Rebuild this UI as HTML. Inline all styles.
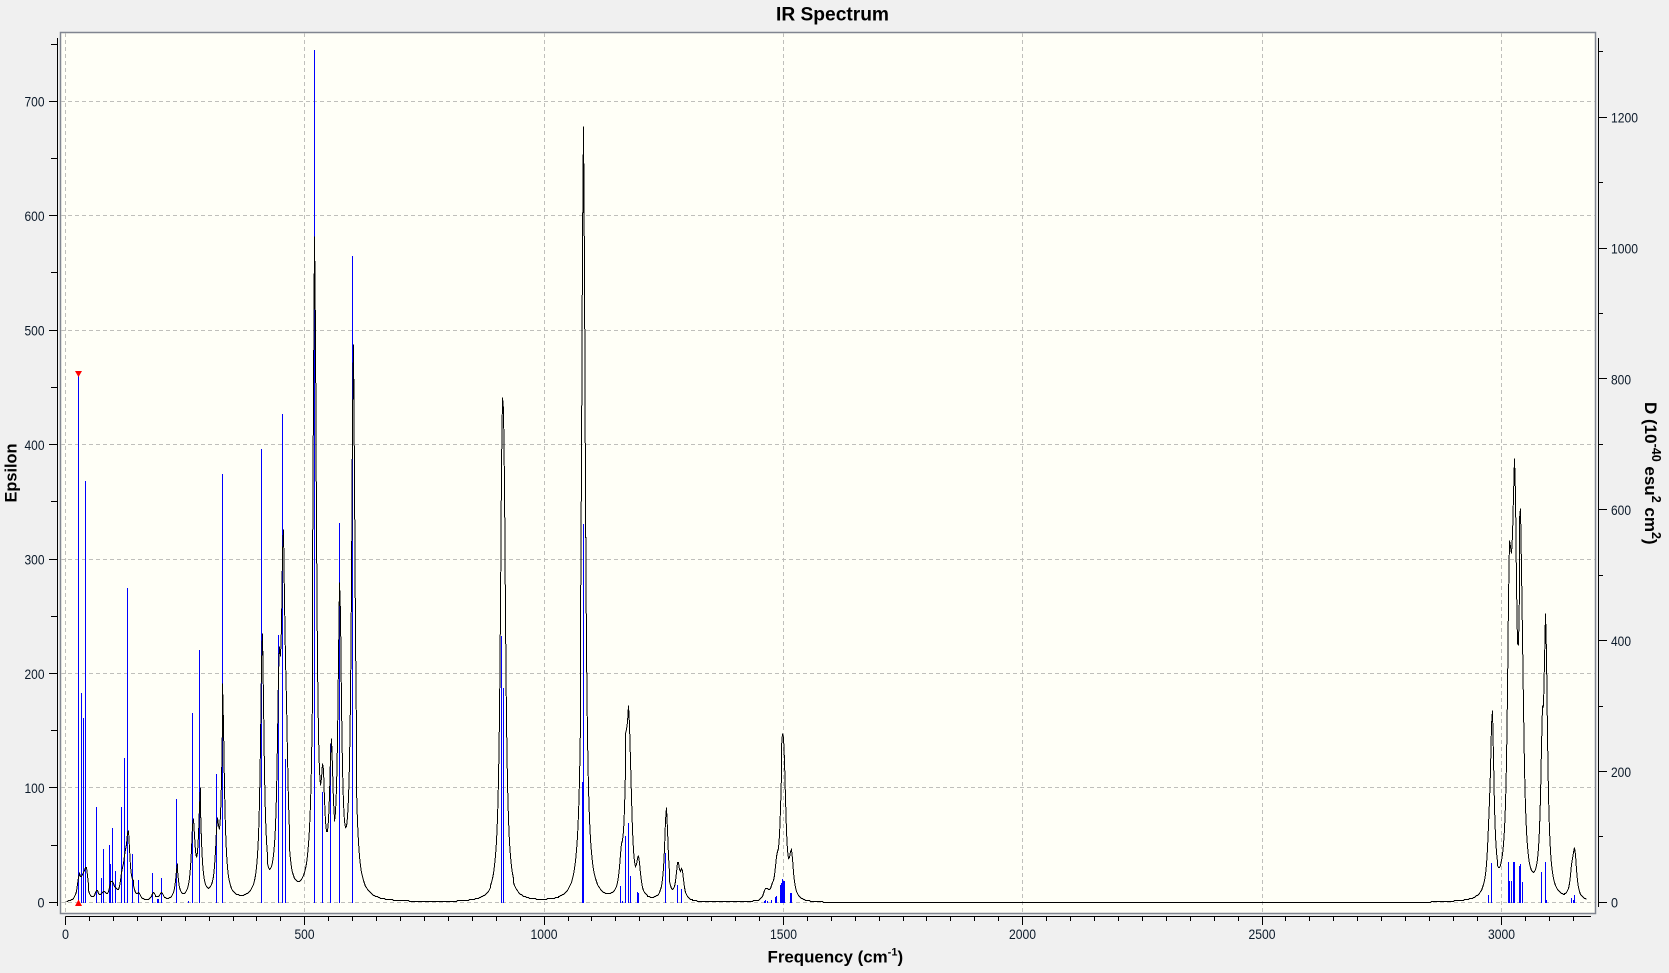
<!DOCTYPE html>
<html><head><meta charset="utf-8"><title>IR Spectrum</title>
<style>
html,body{margin:0;padding:0;background:#f0f0f0;width:1669px;height:973px;overflow:hidden}
svg{display:block}
text{font-family:"Liberation Sans",sans-serif;fill:#000}
.t{font-size:13.5px;fill:#0c1a2a}
.b{font-size:16.9px;font-weight:bold}
</style></head><body>
<svg xmlns="http://www.w3.org/2000/svg" width="1669" height="973" viewBox="0 0 1669 973">
<rect x="0" y="0" width="1669" height="973" fill="#f0f0f0"/>
<rect x="60.5" y="32.5" width="1535" height="881" fill="#fffff7" stroke="#808590" stroke-width="1.5"/>
<path id="grid" fill="none" stroke="#bfbfbb" stroke-width="1" stroke-dasharray="4 3" shape-rendering="crispEdges"/>
<path id="axes" fill="none" stroke="#000" stroke-width="1" shape-rendering="crispEdges"/>
<path id="sticks" fill="none" stroke="#0000ff" stroke-width="1" shape-rendering="crispEdges"/>
<path id="curve" fill="none" stroke="#000" stroke-width="1" shape-rendering="crispEdges"/>
<path d="M75 371H82L78.5 377Z M75 906H82L78.5 899.5Z" fill="#ff0000"/>

<text x="832.5" y="20.5" text-anchor="middle" font-size="19" font-weight="bold" textLength="113" lengthAdjust="spacingAndGlyphs">IR Spectrum</text>

<g class="t" text-anchor="end">
<text class="t" x="44.5" y="106.7" textLength="20" lengthAdjust="spacingAndGlyphs">700</text>
<text class="t" x="44.5" y="221" textLength="20" lengthAdjust="spacingAndGlyphs">600</text>
<text class="t" x="44.5" y="335.5" textLength="20" lengthAdjust="spacingAndGlyphs">500</text>
<text class="t" x="44.5" y="450" textLength="20" lengthAdjust="spacingAndGlyphs">400</text>
<text class="t" x="44.5" y="564.4" textLength="20" lengthAdjust="spacingAndGlyphs">300</text>
<text class="t" x="44.5" y="678.8" textLength="20" lengthAdjust="spacingAndGlyphs">200</text>
<text class="t" x="44.5" y="793.2" textLength="20" lengthAdjust="spacingAndGlyphs">100</text>
<text class="t" x="44.5" y="907.7" textLength="7" lengthAdjust="spacingAndGlyphs">0</text>
</g>

<g>
<text class="t" x="1611" y="122.7" textLength="27" lengthAdjust="spacingAndGlyphs">1200</text>
<text class="t" x="1611" y="253.5" textLength="27" lengthAdjust="spacingAndGlyphs">1000</text>
<text class="t" x="1611" y="384.4" textLength="20" lengthAdjust="spacingAndGlyphs">800</text>
<text class="t" x="1611" y="515.2" textLength="20" lengthAdjust="spacingAndGlyphs">600</text>
<text class="t" x="1611" y="646" textLength="20" lengthAdjust="spacingAndGlyphs">400</text>
<text class="t" x="1611" y="776.9" textLength="20" lengthAdjust="spacingAndGlyphs">200</text>
<text class="t" x="1611" y="907.7" textLength="7" lengthAdjust="spacingAndGlyphs">0</text>
</g>

<g text-anchor="middle">
<text class="t" x="65.5" y="939" textLength="7" lengthAdjust="spacingAndGlyphs">0</text>
<text class="t" x="304.5" y="939" textLength="20" lengthAdjust="spacingAndGlyphs">500</text>
<text class="t" x="544" y="939" textLength="27" lengthAdjust="spacingAndGlyphs">1000</text>
<text class="t" x="783.5" y="939" textLength="27" lengthAdjust="spacingAndGlyphs">1500</text>
<text class="t" x="1022.5" y="939" textLength="27" lengthAdjust="spacingAndGlyphs">2000</text>
<text class="t" x="1262" y="939" textLength="27" lengthAdjust="spacingAndGlyphs">2500</text>
<text class="t" x="1501.5" y="939" textLength="27" lengthAdjust="spacingAndGlyphs">3000</text>
</g>

<text class="b" x="767.5" y="962.5">Frequency (cm<tspan style="font-size:11px" dy="-7">-1</tspan><tspan dy="7">)</tspan></text>
<text class="b" transform="translate(16.5,502.5) rotate(-90)" textLength="59" lengthAdjust="spacingAndGlyphs" style="font-size:16.5px">Epsilon</text>
<text class="b" transform="translate(1645,402) rotate(90)" style="font-size:17px">D (10<tspan style="font-size:12.5px" dy="-7">-40</tspan><tspan dy="7"> esu</tspan><tspan style="font-size:12.5px" dy="-7">2</tspan><tspan dy="7"> cm</tspan><tspan style="font-size:12.5px" dy="-7">2</tspan><tspan dy="7">)</tspan></text>
</svg>
<script>
(function(){
var S=[[78,373],[81,693],[83,718],[85,481],[96,807],[101,878],[103,849],[109,845],[110,864],[112,828],[115,871],[121,807],[124,758],[127,588],[132,854],[138,880],[152,873],[157,899],[158,899],[161,878],[176,799],[188,901],[192,713],[199,650],[216,774],[222,474],[261,449],[278,635],[282,414],[285,759],[314,50],[322,792],[330,744],[339,523],[352,256],[501,636],[503,688],[582,782],[583,524],[620,886],[622,901],[625,836],[628,823],[630,876],[637,892],[638,893],[665,853],[677,885],[681,889],[764,901],[765,900],[767,901],[771,900],[775,897],[776,896],[780,885],[781,883],[782,879],[783,881],[784,881],[790,893],[791,893],[1488,895],[1491,863],[1508,862],[1509,881],[1511,881],[1513,862],[1514,862],[1519,866],[1520,864],[1522,882],[1541,872],[1545,862],[1546,900],[1571,898],[1573,900],[1574,895]];
var E=[[1545.5,60],[352.5,-30],[501.5,-23],[282.5,-23],[339.5,-25],[261.5,-14],[314.5,-9],[1513.5,-15],[1519.5,-7],[782,-4],[628.5,-6]];
var i,d='';
for(i=0;i<S.length;i++){d+='M'+(S[i][0]+.5)+' '+S[i][1]+'V903';}
document.getElementById('sticks').setAttribute('d',d);
var BASE=902.5,K=0.0015,W=1.95;
function y(x){var h=0,j,u;for(j=0;j<S.length;j++){var x0=S[j][0]+.5,f=(x0-65.5)/0.4786,a=(BASE-S[j][1])*K*f;u=(x-x0)/W;h+=a/(1+u*u);}
for(j=0;j<E.length;j++){u=(x-E[j][0])/W;h+=E[j][1]/(1+u*u);}
return BASE-h;}
var c='',x;
for(x=66.46;x<=1587;x+=0.9572){var px=Math.round(x)+.5,py=Math.round(y(x))+.5;c+=(c?'L':'M')+px+' '+py;}
document.getElementById('curve').setAttribute('d',c);
var g='';
for(i=0;i<=6;i++){var gx=Math.floor(65.5+i*500*0.4786)+.5;g+='M'+gx+' 33V913';}
for(i=0;i<=7;i++){var gy=Math.floor(902.3-i*114.43)+.5;g+='M61 '+gy+'H1595';}
document.getElementById('grid').setAttribute('d',g);
var a='M57.5 38V906M1598.5 38V907M65.5 916.5H1591';
for(i=0;i<=15;i++){var ly=Math.floor(902.3-i*57.215)+.5;a+='M'+(i%2?51:49)+' '+ly+'H57.5';}
for(i=0;i<=13;i++){var ry=Math.floor(902.3-i*65.42)+.5;a+='M1598.5 '+ry+'H'+(i%2?1603:1607);}
for(i=0;i<=63;i++){var tx=Math.floor(65.5+i*50*0.4786)+.5;a+='M'+tx+' 916.5V'+(i%10?921:925);}
document.getElementById('axes').setAttribute('d',a);
})();
</script>
</body></html>
